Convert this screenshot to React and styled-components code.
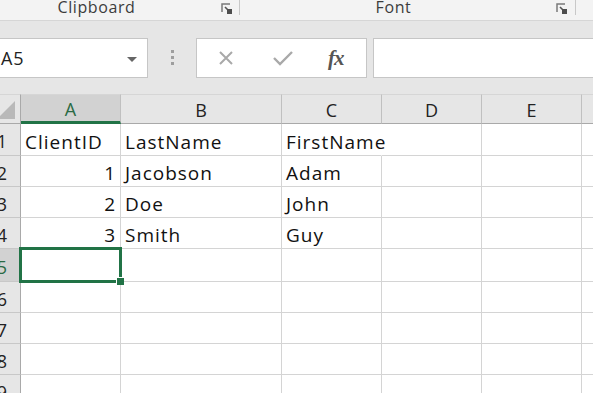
import styled, { createGlobalStyle } from "styled-components";

const GlobalStyle = createGlobalStyle`
  body {
    margin: 0;
    overflow: hidden;
    background: #ffffff;
    font-family: "Open Sans", "Liberation Sans", sans-serif;
  }
`;

const Window = styled.div`
  width: 640px;
  margin-left: -16px;
`;

const Ribbon = styled.div`
  display: flex;
  height: 20px;
  background: #f3f3f3;
  border-bottom: 1px solid #d6d6d6;
`;

const Group = styled.div`
  display: flex;
  align-items: flex-start;
  width: ${(p) => p.width}px;
  height: 15px;
  border-right: 1px solid #c8c8c8;
`;

const GroupLabel = styled.div`
  flex: 1;
  text-align: center;
  font-size: 16px;
  letter-spacing: 0.6px;
  line-height: 17px;
  color: #3c3c3c;
  margin-top: -1px;
`;

const Launcher = styled.svg`
  width: 12px;
  height: 12px;
  margin: 3px ${(p) => p.right}px 0 ${(p) => p.gap}px;
`;

const FormulaArea = styled.div`
  display: flex;
  align-items: flex-start;
  height: 73px;
  padding-top: 17px;
  box-sizing: border-box;
  background: #e6e6e6;
`;

const NameBox = styled.div`
  display: flex;
  align-items: center;
  justify-content: space-between;
  width: 154px;
  height: 40px;
  margin-left: 10px;
  padding: 0 10px 0 6px;
  box-sizing: border-box;
  background: #ffffff;
  border: 1px solid #c6c6c6;
  font-size: 18px;
  letter-spacing: 0.8px;
  color: #222222;
`;

const Caret = styled.span`
  width: 0;
  height: 0;
  border-left: 5px solid transparent;
  border-right: 5px solid transparent;
  border-top: 5px solid #666666;
  margin-top: 2px;
`;

const Grip = styled.div`
  display: flex;
  flex-direction: column;
  gap: 3px;
  width: 3px;
  margin: 12px 22px 0 23px;
`;

const GripDot = styled.span`
  width: 3px;
  height: 3px;
  background: #9e9e9e;
`;

const FxBox = styled.div`
  display: flex;
  align-items: center;
  width: 171px;
  height: 40px;
  box-sizing: border-box;
  background: #ffffff;
  border: 1px solid #c6c6c6;
`;

const FxIcon = styled.svg`
  width: ${(p) => p.size}px;
  height: ${(p) => p.size}px;
  margin-left: ${(p) => p.left}px;
`;

const FxText = styled.span`
  margin-left: 35px;
  font-family: "Liberation Serif", "DejaVu Serif", serif;
  font-style: italic;
  font-weight: bold;
  font-size: 21px;
  color: #555555;
  letter-spacing: -1px;
`;

const FormulaInput = styled.div`
  flex: 1;
  height: 40px;
  margin-left: 6px;
  box-sizing: border-box;
  background: #ffffff;
  border: 1px solid #c6c6c6;
`;

const Sheet = styled.div`
  display: grid;
  grid-template-columns: 37px 100px 161px 100px 100px 100px 100px;
  grid-template-rows: 30px 32px 31px 31px 31px 33px 31px 31px 31px 31px;
  background: #ffffff;
`;

const ColHead = styled.div`
  display: flex;
  align-items: center;
  justify-content: center;
  padding-top: 2px;
  box-sizing: border-box;
  background: ${(p) => (p.active ? "#d2d2d2" : "#e6e6e6")};
  border-right: 1px solid #c0c0c0;
  border-bottom: ${(p) => (p.active ? "3px solid #217346" : "1px solid #a9a9a9")};
  border-top: 1px solid #d6d6d6;
  font-size: 18px;
  color: ${(p) => (p.active ? "#2a6a44" : "#222222")};
`;

const Corner = styled.div`
  display: flex;
  align-items: flex-end;
  justify-content: flex-end;
  padding: 0 5px 4px 0;
  box-sizing: border-box;
  background: #e6e6e6;
  border-right: 1px solid #a9a9a9;
  border-bottom: 1px solid #a9a9a9;
  border-top: 1px solid #d6d6d6;
`;

const RowHead = styled.div`
  display: flex;
  align-items: center;
  justify-content: center;
  padding-top: 3px;
  box-sizing: border-box;
  background: ${(p) => (p.active ? "#d2d2d2" : "#e6e6e6")};
  border-right: 1px solid #a9a9a9;
  border-bottom: 1px solid #c8c8c8;
  font-size: 18px;
  color: ${(p) => (p.active ? "#2a6a44" : "#222222")};
`;

const Cell = styled.div`
  position: relative;
  display: flex;
  align-items: center;
  justify-content: ${(p) => (p.num ? "flex-end" : "flex-start")};
  padding: 4px 4px 0 4px;
  box-sizing: border-box;
  border-right: 1px solid ${(p) => (p.spill ? "transparent" : "#d4d4d4")};
  border-bottom: 1px solid #d4d4d4;
  font-size: 19px;
  letter-spacing: 1px;
  color: #111111;
  white-space: nowrap;
  overflow: visible;
  z-index: ${(p) => (p.selected ? 2 : 1)};

  ${(p) =>
    p.selected &&
    `
    &::after {
      content: "";
      position: absolute;
      inset: -2px -2px -2px -2px;
      border: 3px solid #217346;
    }
    &::before {
      content: "";
      position: absolute;
      right: -4px;
      bottom: -4px;
      width: 7px;
      height: 7px;
      background: #217346;
      border-left: 1px solid #ffffff;
      border-top: 1px solid #ffffff;
      z-index: 3;
    }
  `}
`;

const columns = ["A", "B", "C", "D", "E", "F"];

const data = [
  [{ v: "ClientID" }, { v: "LastName" }, { v: "FirstName", spill: true }],
  [{ v: "1", num: true }, { v: "Jacobson" }, { v: "Adam" }],
  [{ v: "2", num: true }, { v: "Doe" }, { v: "John" }],
  [{ v: "3", num: true }, { v: "Smith" }, { v: "Guy" }],
  [],
  [],
  [],
  [],
  [],
];

const LauncherIcon = ({ gap, right }) => (
  <Launcher gap={gap} right={right} viewBox="0 0 12 12">
    <path d="M1 9 V1 H9" fill="none" stroke="#7a7a7a" strokeWidth="1.5" />
    <path d="M4 4 L10 10 M6 10 H10 V6" fill="none" stroke="#555555" strokeWidth="1.6" />
    <rect x="6" y="6" width="5" height="5" fill="#4d4d4d" />
  </Launcher>
);

const App = () => {
  return (
    <Window>
      <GlobalStyle />
      <Ribbon>
        <Group width={255}>
          <GroupLabel>Clipboard</GroupLabel>
          <LauncherIcon gap={12} right={6} />
        </Group>
        <Group width={335}>
          <GroupLabel>Font</GroupLabel>
          <LauncherIcon gap={9} right={7} />
        </Group>
      </Ribbon>

      <FormulaArea>
        <NameBox>
          <span>A5</span>
          <Caret />
        </NameBox>
        <Grip>
          <GripDot />
          <GripDot />
          <GripDot />
        </Grip>
        <FxBox>
          <FxIcon size={16} left={21} viewBox="0 0 16 16">
            <path d="M2 2 L14 14 M14 2 L2 14" stroke="#a9a9a9" strokeWidth="2" fill="none" />
          </FxIcon>
          <FxIcon size={20} left={39} viewBox="0 0 20 16">
            <path d="M1 8 L7 14 L19 2" stroke="#a9a9a9" strokeWidth="2.4" fill="none" />
          </FxIcon>
          <FxText>fx</FxText>
        </FxBox>
        <FormulaInput />
      </FormulaArea>

      <Sheet>
        <Corner>
          <svg width="18" height="18" viewBox="0 0 18 18">
            <polygon points="18,0 18,18 0,18" fill="#b9b9b9" />
          </svg>
        </Corner>
        {columns.map((c) => (
          <ColHead key={c} active={c === "A"}>
            {c}
          </ColHead>
        ))}
        {data.map((row, r) => (
          <>
            <RowHead key={`h${r}`} active={r === 4}>
              {r + 1}
            </RowHead>
            {columns.map((c, ci) => {
              const cell = row[ci] || {};
              return (
                <Cell
                  key={`${r}-${c}`}
                  num={cell.num}
                  spill={cell.spill}
                  selected={r === 4 && ci === 0}
                >
                  {cell.v}
                </Cell>
              );
            })}
          </>
        ))}
      </Sheet>
    </Window>
  );
};

export default App;
